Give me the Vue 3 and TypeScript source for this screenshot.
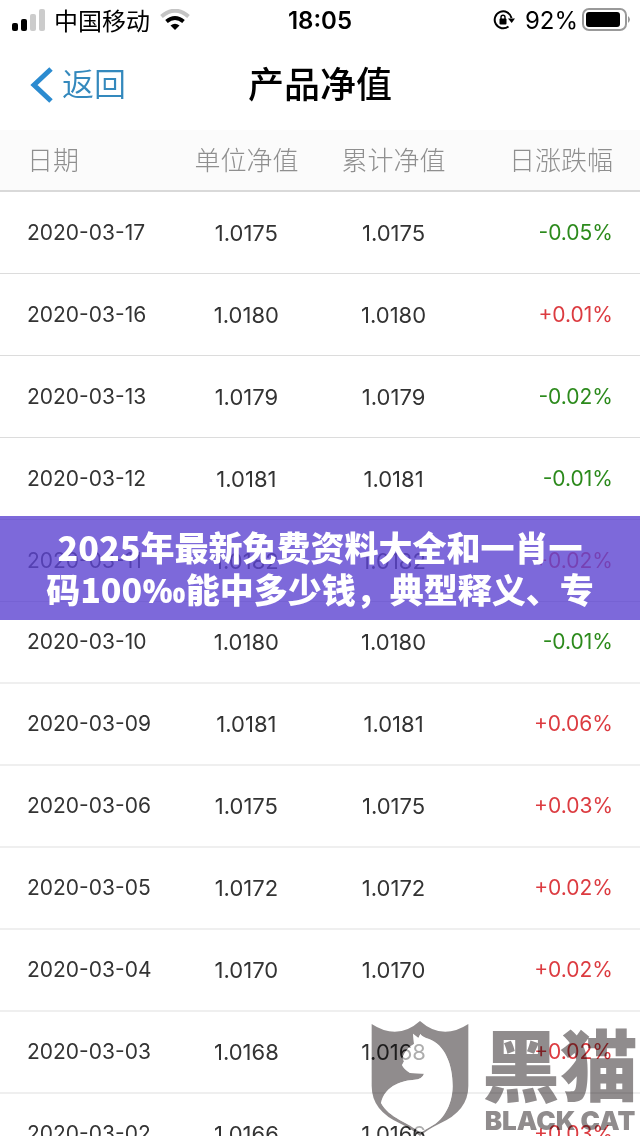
<script setup lang="ts">
interface NetValue {
  date: string
  unit: string
  total: string
  change: string
}

const rows: NetValue[] = [
  { date: '2020-03-17', unit: '1.0175', total: '1.0175', change: '-0.05%' },
  { date: '2020-03-16', unit: '1.0180', total: '1.0180', change: '+0.01%' },
  { date: '2020-03-13', unit: '1.0179', total: '1.0179', change: '-0.02%' },
  { date: '2020-03-12', unit: '1.0181', total: '1.0181', change: '-0.01%' },
  { date: '2020-03-11', unit: '1.0182', total: '1.0182', change: '+0.02%' },
  { date: '2020-03-10', unit: '1.0180', total: '1.0180', change: '-0.01%' },
  { date: '2020-03-09', unit: '1.0181', total: '1.0181', change: '+0.06%' },
  { date: '2020-03-06', unit: '1.0175', total: '1.0175', change: '+0.03%' },
  { date: '2020-03-05', unit: '1.0172', total: '1.0172', change: '+0.02%' },
  { date: '2020-03-04', unit: '1.0170', total: '1.0170', change: '+0.02%' },
  { date: '2020-03-03', unit: '1.0168', total: '1.0168', change: '+0.02%' },
  { date: '2020-03-02', unit: '1.0166', total: '1.0166', change: '+0.03%' },
]

const shield = 'M2 9Q80 60 147 0Q214 60 292 9V195Q292 270 205 308Q170 325 147 345Q124 325 89 308Q2 270 2 195Z'
const figure =
  'M126 38L142 51L148 39Q154 48 174 54C220 70 246 130 245 196C244 255 215 302 172 321L148 335C112 304 55 292 30 246C42 190 100 178 130 176Q154 174 159 158L117 156Q98 144 93 132L99 121L94 112Q104 82 129 69Z'
</script>

<template>
  <main class="screen">
    <div class="status">
      <div class="side">
        <svg class="signal" viewBox="0 0 34 22" aria-hidden="true">
          <rect x="0" y="14" width="6" height="8" rx="2" />
          <rect x="9" y="10" width="6" height="12" rx="2" />
          <rect x="18" y="5" width="6" height="17" rx="2" fill="#ccc" />
          <rect x="27" y="0" width="6" height="22" rx="2" fill="#ccc" />
        </svg>
        <span class="carrier">中国移动</span>
        <svg class="wifi" viewBox="0 0 30 22" aria-hidden="true">
          <path d="M1.5 7.5Q15-4 28.500 7.500" fill="none" stroke="#c4c4c4" stroke-width="4" />
          <path d="M6.500 12.500Q15 5.500 23.500 12.500" fill="none" stroke="#000" stroke-width="4" />
          <path d="M10.500 16.500Q15 13 19.500 16.500L15 21Z" />
        </svg>
      </div>
      <time class="clock">18:05</time>
      <div class="side end">
        <svg class="lock" viewBox="0 0 22 22" aria-hidden="true">
          <path d="M15.500 17.500A8.500 8.500 0 1 1 18.500 9" fill="none" stroke="#000" stroke-width="2" />
          <path d="M15 9.500H22L18.700 14Z" />
          <rect x="6.500" y="9.500" width="7" height="6" rx="1" />
          <path d="M8 10V8.200a2 2 0 0 1 4 0V10" fill="none" stroke="#000" stroke-width="1.400" />
        </svg>
        <span class="percent">92%</span>
        <svg class="battery" viewBox="0 0 50 24" aria-hidden="true">
          <rect x="1" y="1" width="43" height="21" rx="6" fill="none" stroke="#999" stroke-width="2" />
          <rect x="4" y="4" width="34" height="15" rx="3" />
          <path d="M46 8Q50 11.500 46 15Z" fill="#999" />
        </svg>
      </div>
    </div>

    <header class="nav">
      <button class="back" type="button">
        <svg viewBox="0 0 24 36" aria-hidden="true">
          <path d="M22 2L5 18L22 34" fill="none" stroke="#2b8bd0" stroke-width="5" />
        </svg>
        <span>返回</span>
      </button>
      <h1>产品净值</h1>
    </header>

    <table>
      <thead>
        <tr>
          <th scope="col">日期</th>
          <th scope="col">单位净值</th>
          <th scope="col">累计净值</th>
          <th scope="col">日涨跌幅</th>
        </tr>
      </thead>
      <tbody>
        <tr v-for="row in rows" :key="row.date">
          <td>{{ row.date }}</td>
          <td>{{ row.unit }}</td>
          <td>{{ row.total }}</td>
          <td :class="row.change.startsWith('-') ? 'down' : 'up'">{{ row.change }}</td>
        </tr>
      </tbody>
    </table>

    <div class="banner">2025年最新免费资料大全和一肖一<br />码100<span class="permille">‰</span>能中多少钱，典型释义、专</div>

    <svg class="cat shield" viewBox="0 0 294 345" aria-hidden="true">
      <path :d="shield + figure" fill-rule="evenodd" />
    </svg>
    <svg class="cat figure" viewBox="0 0 294 345" aria-hidden="true">
      <path :d="figure" />
    </svg>
    <div class="brand">
      <strong>黑猫</strong>
      <span>BLACK CAT</span>
    </div>
  </main>
</template>

<style>
body {
  margin: 0;
}
</style>

<style scoped>
.screen {
  position: relative;
  height: 100vh;
  overflow: hidden;
  background: #fff;
  color: #333;
  font-family: Inter, "Noto Sans CJK SC", sans-serif;
}

.status {
  display: flex;
  align-items: center;
  height: 40px;
  padding: 0 12px;
  color: #000;
}

.side {
  display: flex;
  flex: 1;
  align-items: center;
}

.end {
  justify-content: flex-end;
}

.signal {
  width: 34px;
  height: 22px;
  margin-right: 8px;
}

.carrier {
  padding-bottom: 2px;
  font-size: 24px;
}

.wifi {
  width: 30px;
  height: 22px;
  margin-left: 10px;
}

.clock {
  font-size: 24px;
  font-weight: 600;
}

.lock {
  width: 22px;
  height: 22px;
  margin-right: 10px;
}

.percent {
  margin-right: 4px;
  font-size: 24px;
}

.battery {
  width: 50px;
  height: 24px;
  margin-right: -4px;
}

.nav {
  display: grid;
  grid-template-columns: 1fr auto 1fr;
  align-items: center;
  height: 90px;
}

.back {
  display: flex;
  align-items: center;
  justify-self: start;
  gap: 8px;
  padding: 0 0 0 28px;
  border: 0;
  background: none;
  color: #3489bd;
  font-family: inherit;
  font-size: 32px;
  font-weight: 350;
}

.back svg {
  width: 26px;
  height: 36px;
}

.back span,
h1 {
  padding-bottom: 6px;
}

h1 {
  margin: 0;
  color: #000;
  font-size: 36px;
  font-weight: 500;
}

table {
  width: 100%;
  border-collapse: separate;
  border-spacing: 0;
  table-layout: fixed;
}

th {
  box-sizing: border-box;
  width: 23%;
  height: 62px;
  padding: 0 0 4px;
  border-bottom: 2px solid #d9d9d9;
  background: #fbfbfb;
  color: #8f8f8f;
  font-size: 26px;
  font-weight: 300;
}

th:first-child,
th:last-child {
  width: 27%;
}

td {
  box-sizing: border-box;
  height: 82px;
  padding: 0;
  border-bottom: 1px solid #dcdcdc;
  font-size: 22px;
  line-height: 28px;
  text-align: center;
}

tbody tr:nth-child(n + 6) td {
  border-bottom: 2px solid #efefef;
}

tr > :first-child {
  padding-left: 27px;
  text-align: left;
}

tr > :last-child {
  padding-right: 27px;
  text-align: right;
}

td:first-child,
td:last-child {
  font-size: 21px;
}

.down {
  color: #2c8a1c;
}

.up {
  color: #dc3b40;
}

.banner {
  position: absolute;
  top: 50%;
  right: 0;
  left: 0;
  padding: 10px 0;
  transform: translateY(-50%);
  background: rgba(92, 67, 209, 0.8);
  color: #fff;
  font-family: "Noto Sans CJK SC", sans-serif;
  font-size: 34px;
  font-weight: 900;
  line-height: 42px;
  text-align: center;
}

.permille {
  font-family: "Open Sans", sans-serif;
  font-weight: 700;
  line-height: 1;
}

.cat {
  position: absolute;
  right: 171px;
  bottom: 0;
  width: 98px;
  height: 115px;
}

.shield {
  fill: #908c8d;
  mix-blend-mode: multiply;
}

.figure {
  fill: rgba(255, 255, 255, 0.6);
}

.brand {
  position: absolute;
  right: 2px;
  bottom: 0;
  color: #908c8d;
  mix-blend-mode: multiply;
  text-align: center;
}

.brand strong {
  display: block;
  font-size: 78px;
  font-weight: 900;
  line-height: 76px;
}

.brand span {
  display: block;
  font-size: 26px;
  font-weight: 900;
  line-height: 30px;
  white-space: nowrap;
}
</style>
